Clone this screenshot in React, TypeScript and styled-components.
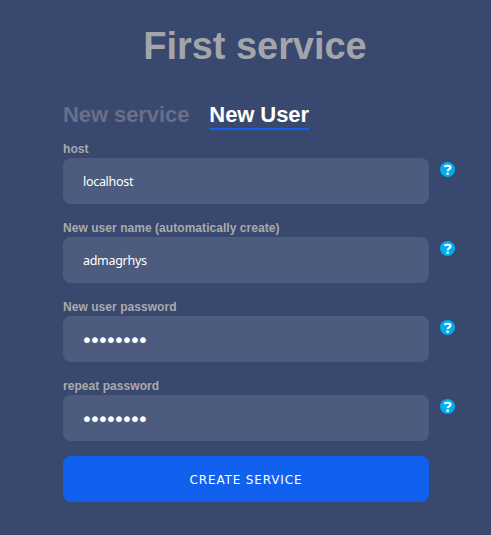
import React from "react";
import styled, { createGlobalStyle } from "styled-components";

const GlobalStyle = createGlobalStyle`
  * { box-sizing: border-box; }
  body { margin: 0; background: #39486f; }
`;

const Page = styled.main`
  height: 535px;
  padding: 24px 0 0 63px;
  background: #39486f;
  font-family: "Liberation Sans", Arial, sans-serif;
  overflow: hidden;
`;

const Title = styled.h1`
  width: 384px;
  height: 44px;
  margin: 0 0 32px;
  color: #a2a6aa;
  font-size: 38px;
  line-height: 44px;
  letter-spacing: -0.05px;
  text-align: center;
`;

const Tabs = styled.nav`
  display: flex;
  gap: 20px;
  height: 42px;
  align-items: flex-start;
`;

const Tab = styled.a<{ $active?: boolean }>`
  height: 30px;
  color: ${(p) => (p.$active ? "#ffffff" : "#696f8a")};
  font-size: 22px;
  font-weight: 700;
  line-height: 29px;
  letter-spacing: -0.08px;
  white-space: nowrap;
  border-bottom: 2px solid ${(p) => (p.$active ? "#1161ee" : "transparent")};
`;

const Field = styled.div`
  display: grid;
  grid-template-columns: 366px 15px;
  grid-template-rows: 16px 46px;
  column-gap: 11px;
  margin-bottom: 17px;
`;

const Label = styled.label`
  grid-column: 1 / -1;
  color: #aaaaaa;
  font-size: 12px;
  font-weight: 700;
  line-height: 14px;
  letter-spacing: 0.05px;
`;

const Input = styled.input`
  width: 366px;
  height: 46px;
  padding: 0 20px;
  border: 0;
  border-radius: 8px;
  outline: 0;
  background: #4d5b7e;
  color: #ffffff;
  font: 12.5px "Noto Sans", sans-serif;
  letter-spacing: -0.3px;

  &[type="password"] {
    padding: 1px 18px 0;
    font: 20px "DejaVu Sans", sans-serif;
    letter-spacing: -3.8px;
  }
`;

const Help = styled.svg`
  width: 15px;
  height: 15px;
  margin-top: 4px;
`;

const Submit = styled.button`
  width: 366px;
  height: 46px;
  margin-top: -2px;
  padding: 2px 0 0;
  border: 0;
  border-radius: 8px;
  background: #1161ee;
  color: #ffffff;
  font: 12px "DejaVu Sans", sans-serif;
  letter-spacing: 0.85px;
`;

const fields = [
  { label: "host", value: "localhost" },
  { label: "New user name (automatically create)", value: "admagrhys" },
  { label: "New user password", value: "password", secret: true },
  { label: "repeat password", value: "password", secret: true },
];

export default function App() {
  return (
    <Page>
      <GlobalStyle />
      <Title>First service</Title>
      <Tabs>
        <Tab>New service</Tab>
        <Tab $active>New User</Tab>
      </Tabs>
      {fields.map((f) => (
        <Field key={f.label}>
          <Label>{f.label}</Label>
          <Input type={f.secret ? "password" : "text"} defaultValue={f.value} spellCheck={false} />
          <Help viewBox="0 0 15 15">
            <circle cx="7.5" cy="7.5" r="7.5" fill="#00adef" />
            <path d="M4.4 4.7C5.6 3.5 10.5 3.1 10.5 5.6C10.5 7.5 7.6 7.2 7.6 9.2" fill="none" stroke="#fff" strokeWidth="2.1" />
            <rect x="6.4" y="10.6" width="2.4" height="2.2" fill="#fff" />
          </Help>
        </Field>
      ))}
      <Submit>CREATE SERVICE</Submit>
    </Page>
  );
}
